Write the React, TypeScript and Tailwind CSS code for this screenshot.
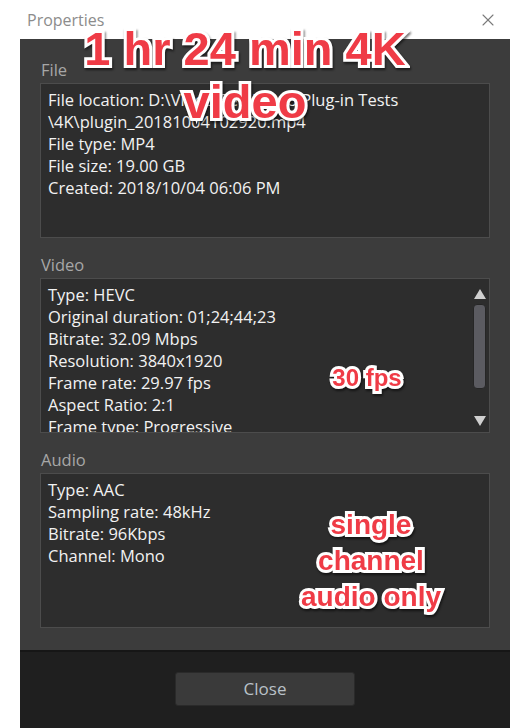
import { X } from 'lucide-react'

const fileLines = [
  'File location: D:\\Video Beta\\2018 Plug-in Tests',
  '\\4K\\plugin_20181004102920.mp4',
  'File type: MP4',
  'File size: 19.00 GB',
  'Created: 2018/10/04 06:06 PM',
]

const videoLines = [
  'Type: HEVC',
  'Original duration: 01;24;44;23',
  'Bitrate: 32.09 Mbps',
  'Resolution: 3840x1920',
  'Frame rate: 29.97 fps',
  'Aspect Ratio: 2:1',
  'Frame type: Progressive',
]

const audioLines = [
  'Type: AAC',
  'Sampling rate: 48kHz',
  'Bitrate: 96Kbps',
  'Channel: Mono',
]

const note =
  "absolute text-center font-bold text-[#ef3b46] font-['Liberation_Sans',Arial,sans-serif] [-webkit-text-stroke:6px_white] [paint-order:stroke_fill] drop-shadow-[1px_2px_1px_rgba(0,0,0,0.55)] whitespace-nowrap"

function Lines({ lines }: { lines: string[] }) {
  return (
    <div className="flex-1 overflow-hidden pl-[7px] pt-[5px]">
      {lines.map((line) => (
        <div key={line} className="h-[22px] leading-[22px] whitespace-nowrap">
          {line}
        </div>
      ))}
    </div>
  )
}

function Section({
  label,
  children,
  className = '',
}: {
  label: string
  children: React.ReactNode
  className?: string
}) {
  return (
    <div className={className}>
      <div className="h-[26px] leading-[26px] pl-px text-[#a7a7a7]">{label}</div>
      <div className="flex h-[155px] border border-[#4c4c4c] bg-[#2d2d2d] text-[#f2f2f2]">
        {children}
      </div>
    </div>
  )
}

export default function App() {
  return (
    <div className="relative w-[512px] h-[728px] bg-white overflow-hidden font-['Open_Sans','Noto_Sans',sans-serif] text-[16.5px]">
      <div className="ml-[20px] w-[490px] h-[728px] flex flex-col">
        <header className="h-[39px] flex items-center justify-between bg-white pl-[7px] pr-[12px]">
          <span className="text-[16px] text-[#8c8c8c]">Properties</span>
          <X size={20} strokeWidth={1.3} color="#7a7a7a" />
        </header>

        <main className="flex-1 flex flex-col bg-[#3c3c3c] px-[20px] pt-[18px] pb-[22px]">
          <Section label="File">
            <Lines lines={fileLines} />
          </Section>

          <Section label="Video" className="mt-[14px]">
            <Lines lines={videoLines} />
            <div className="w-[19px] flex flex-col items-center pt-[10px] pb-[6px]">
              <div className="w-0 h-0 border-x-[6px] border-x-transparent border-b-[10px] border-b-[#cfcfcf]" />
              <div className="mt-[5px] w-[13px] h-[85px] rounded-[4px] bg-[#5b5b61] border border-[#262626]" />
              <div className="mt-auto w-0 h-0 border-x-[6px] border-x-transparent border-t-[10px] border-t-[#cfcfcf]" />
            </div>
          </Section>

          <Section label="Audio" className="mt-[14px]">
            <Lines lines={audioLines} />
          </Section>
        </main>

        <footer className="h-[78px] flex justify-center bg-[#1f1f1f] border-t-2 border-[#161616] pt-[20px]">
          <button className="w-[180px] h-[34px] rounded-[3px] bg-[#3a3a3a] border border-[#2a2a2a] text-[17px] text-[#b9c1c8]">
            Close
          </button>
        </footer>
      </div>

      <div className={`${note} left-[60px] top-[22px] w-[370px] text-[47px] leading-[53px]`}>
        1 hr 24 min 4K
        <br />
        video
      </div>
      <div className={`${note} left-[317px] top-[364px] w-[100px] text-[24px] leading-[28px]`}>
        30 fps
      </div>
      <div className={`${note} left-[291px] top-[507px] w-[160px] text-[28px] leading-[36px]`}>
        single
        <br />
        channel
        <br />
        audio only
      </div>
    </div>
  )
}
